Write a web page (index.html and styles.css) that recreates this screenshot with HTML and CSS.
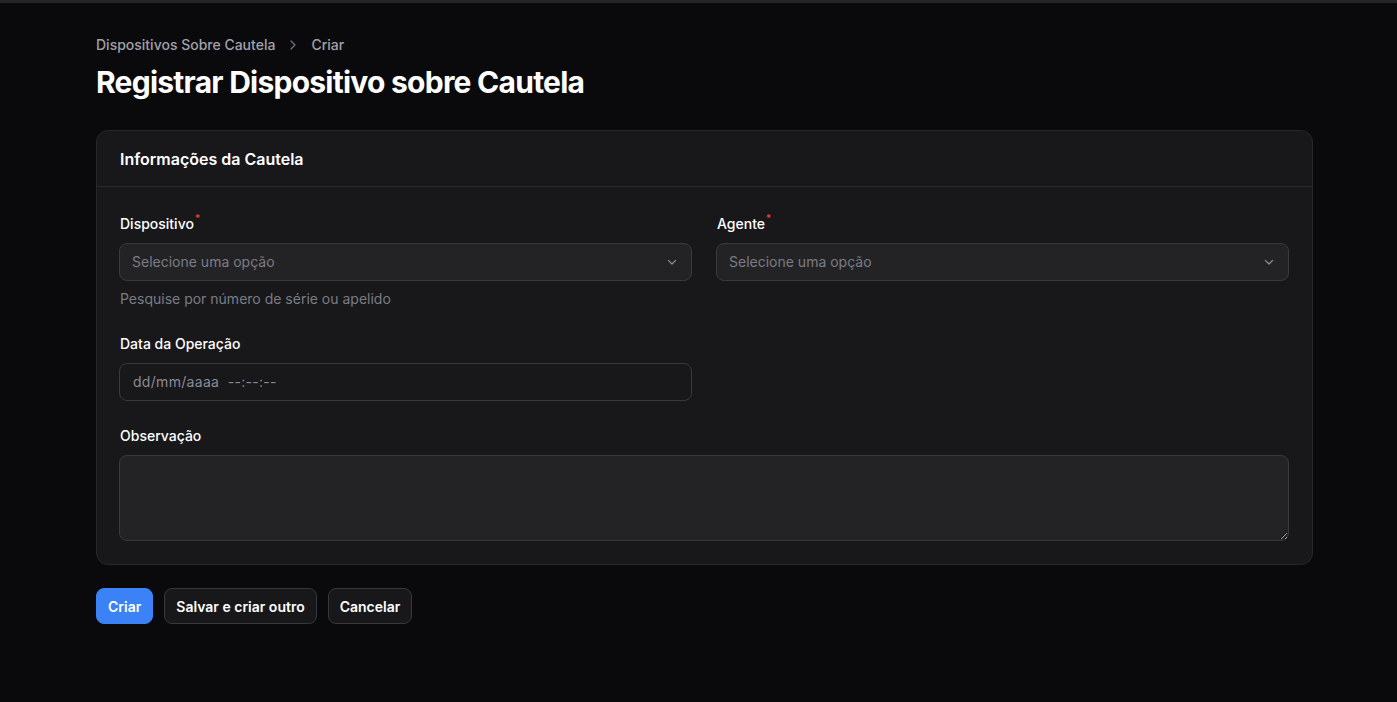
FILE: index.html
```html
<!DOCTYPE html>
<html lang="pt-BR">
<head>
<meta charset="utf-8">
<title>Registrar Dispositivo sobre Cautela</title>
<link rel="stylesheet" href="styles.css">
</head>
<body>
<div class="topbar"></div>
<main class="page">
  <nav class="breadcrumb">
    <span class="crumb">Dispositivos Sobre Cautela</span>
    <svg class="sep" width="16" height="16" viewBox="0 0 20 20" fill="none"><path d="M7.5 5l5 5-5 5" stroke="currentColor" stroke-width="1.5" stroke-linecap="round" stroke-linejoin="round"/></svg>
    <span class="crumb current">Criar</span>
  </nav>
  <h1 class="title">Registrar Dispositivo sobre Cautela</h1>

  <section class="card">
    <header class="card-head">Informações da Cautela</header>
    <div class="card-body">
      <div class="field">
        <label class="label">Dispositivo<sup class="req">*</sup></label>
        <div class="input select">
          <span class="placeholder">Selecione uma opção</span>
          <svg class="chev" width="16" height="16" viewBox="0 0 20 20" fill="none"><path d="M5.5 8l4.5 4.5L14.5 8" stroke="currentColor" stroke-width="1.6" stroke-linecap="round" stroke-linejoin="round"/></svg>
        </div>
        <p class="hint">Pesquise por número de série ou apelido</p>
      </div>
      <div class="field">
        <label class="label">Agente<sup class="req">*</sup></label>
        <div class="input select">
          <span class="placeholder">Selecione uma opção</span>
          <svg class="chev" width="16" height="16" viewBox="0 0 20 20" fill="none"><path d="M5.5 8l4.5 4.5L14.5 8" stroke="currentColor" stroke-width="1.6" stroke-linecap="round" stroke-linejoin="round"/></svg>
        </div>
      </div>
      <div class="field">
        <label class="label">Data da Operação</label>
        <div class="input date">
          <span class="placeholder">dd/mm/aaaa&nbsp; --:--:--</span>
        </div>
      </div>
      <div class="field"></div>
      <div class="field full">
        <label class="label">Observação</label>
        <textarea class="textarea"></textarea>
      </div>
    </div>
  </section>

  <div class="actions">
    <button class="btn primary">Criar</button>
    <button class="btn">Salvar e criar outro</button>
    <button class="btn">Cancelar</button>
  </div>
</main>
</body>
</html>
```

FILE: styles.css
```css
* { box-sizing: border-box; }
html, body { margin: 0; padding: 0; }
body {
  background: #0a0a0c;
  color: #fff;
  font-family: Inter, "Noto Sans", sans-serif;
  font-size: 14px;
  line-height: 20px;
}
.topbar {
  height: 3px;
  background: #242426;
}
.page {
  padding: 32px 84px 40px 96px;
}
.breadcrumb {
  display: flex;
  align-items: center;
  gap: 10px;
  height: 20px;
  color: #a1a1aa;
  font-weight: 500;
}
.breadcrumb .sep { color: #71717a; }
.breadcrumb .current { color: #a1a1aa; }
.title {
  margin: 9px 0 0;
  font-size: 30px;
  line-height: 36px;
  font-weight: 700;
  letter-spacing: -0.75px;
  color: #fff;
}
.card {
  margin-top: 30px;
  background: #18181b;
  border: 1px solid #27272a;
  border-radius: 12px;
  width: 1217px;
}
.card-head {
  height: 56px;
  display: flex;
  align-items: center;
  padding: 0 23px;
  font-size: 16px;
  font-weight: 600;
  line-height: 24px;
  border-bottom: 1px solid #2c2c30;
}
.card-body {
  display: grid;
  grid-template-columns: 1fr 1fr;
  column-gap: 24px;
  row-gap: 24px;
  padding: 26px 23px 23px 22px;
}
.field { display: flex; flex-direction: column; }
.field.full { grid-column: 1 / -1; }
.label {
  font-weight: 500;
  line-height: 20px;
  color: #fff;
  padding: 1px 0 0 1px;
  margin-bottom: 9px;
}
.req {
  color: #ef4444;
  font-size: 10px;
  line-height: 0;
  vertical-align: 7px;
  margin-left: 1px;
}
.input {
  height: 38px;
  border: 1px solid #3a3a3e;
  border-radius: 8px;
  background: #232326;
  display: flex;
  align-items: center;
  padding: 0 12px;
}
.input.date { background: #18181b; padding-left: 13px; }
.placeholder { color: #7b7b84; flex: 1; }
.date .placeholder { color: #8b8b92; letter-spacing: 0.3px; }
.chev { color: #8b8b94; margin-right: -1px; }
.hint {
  margin: 8px 0 0;
  padding-left: 1px;
  color: #7b7b84;
}
.textarea {
  display: block;
  width: 100%;
  height: 86px;
  border: 1px solid #3a3a3e;
  border-radius: 8px;
  background: #232326;
  resize: vertical;
  color: #fff;
  font: inherit;
  color-scheme: dark;
  outline: none;
}
.actions {
  display: flex;
  gap: 11px;
  margin-top: 23px;
}
.btn {
  height: 36px;
  padding: 0 11px;
  border-radius: 8px;
  border: 1px solid #38383c;
  background: #18181b;
  color: #fff;
  font-family: inherit;
  font-size: 14px;
  font-weight: 600;
}
.btn.primary {
  background: #3b82f6;
  border-color: #3b82f6;
}
```
